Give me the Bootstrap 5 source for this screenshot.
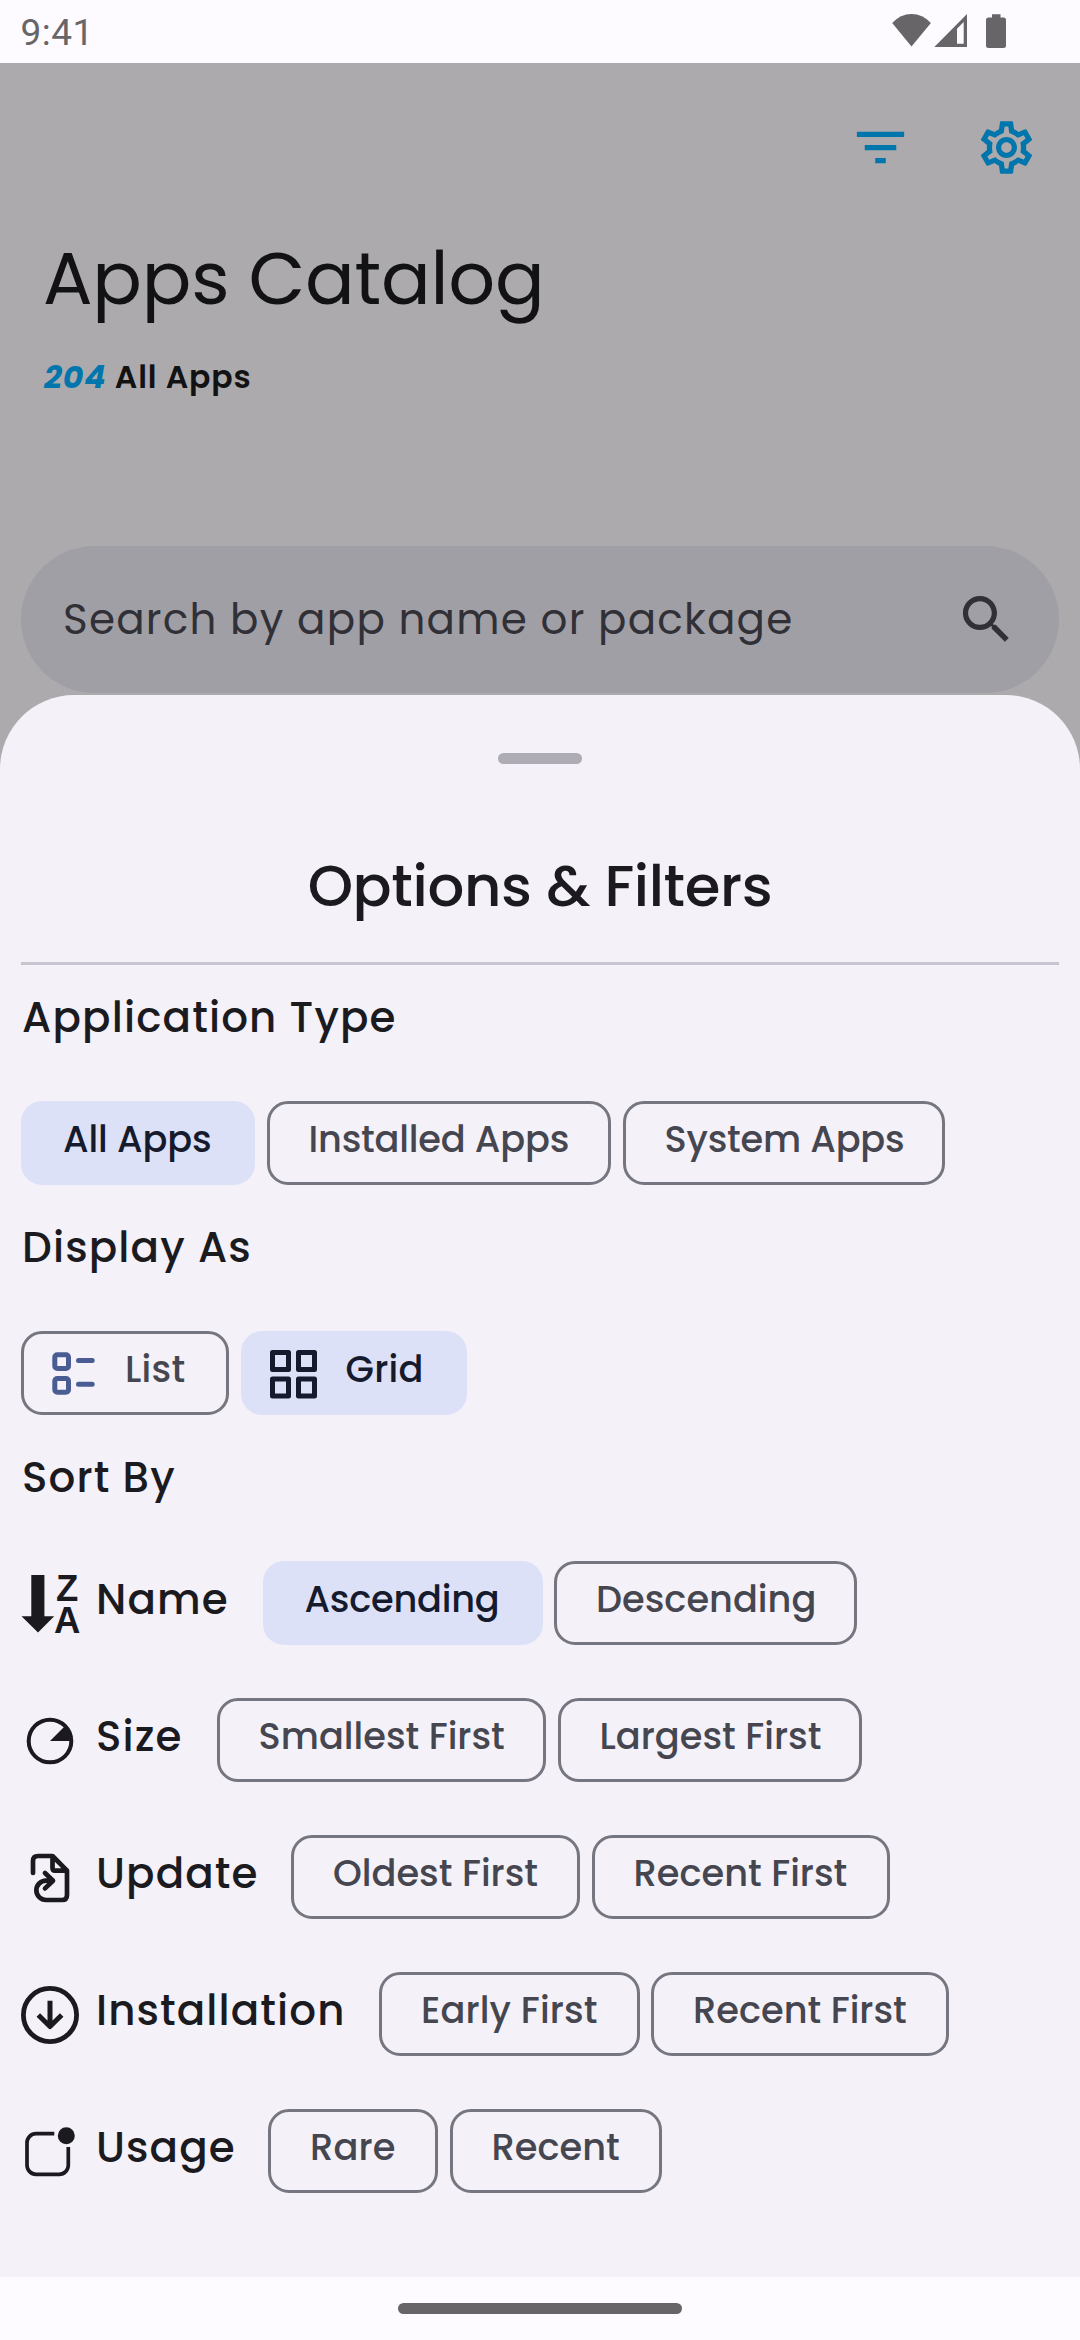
<!DOCTYPE html>
<html lang="en">
<head>
<meta charset="utf-8">
<meta name="viewport" content="width=device-width, initial-scale=1">
<title>Apps Catalog</title>
<link href="https://cdn.jsdelivr.net/npm/bootstrap@5.3.0/dist/css/bootstrap.min.css" rel="stylesheet">
<style>
  body { font-family: Poppins, Inter, sans-serif; background: #fdfbff; color: #1b1b1f; }
  svg { display: block; flex: none; }
  .screen { width: 1080px; height: 2340px; }
  .status-bar { height: 63px; background: #fdfbff; color: #686568; padding-left: 20.5px; }
  .clock { font: 400 37px/66px Roboto, sans-serif; letter-spacing: .5px; }
  .status-icons { margin-right: 60px; }
  .scrimmed { height: 712px; background: #acaaad; color: #121214; padding: 53px 21px 0; }
  .toolbar { gap: 62.7px; color: #0076ac; padding-right: 21px; }
  .page-title { margin: 60px 0 0 22px; font-size: 73.5px; line-height: 80px; font-weight: 400; letter-spacing: -.26px; }
  .app-count { margin: 38px 0 0 23px; font-size: 31.5px; line-height: 40px; font-weight: 600; letter-spacing: .85px; }
  .app-count em { color: #0076ac; font-weight: 700; }
  .search-box { margin-top: 149px; height: 147px; border-radius: 74px; background: #a09fa5; color: #303036; padding: 0 41px 0 42px; }
  .search-hint { font-size: 42px; letter-spacing: 1.25px; }
  .sheet { margin-top: -80px; height: 1582px; border-radius: 74px 74px 0 0; background: #f4f1f9; padding: 58px 21px 0; }
  .grip { width: 84px; height: 11px; border-radius: 5.5px; background: #aeacb4; }
  .sheet-title { margin: 84px 0 0; font-size: 57.75px; line-height: 76px; font-weight: 500; letter-spacing: -.35px; }
  .rule { height: 3px; background: #c8c5d0; margin: 38px 0 -10px; }
  .heading { height: 146px; margin: 0; padding-left: 1px; font-size: 42px; line-height: 126px; font-weight: 500; letter-spacing: 1.15px; }
  .chips { gap: 11.5px; }
  .chip { height: 84px; border: 3px solid #757680; border-radius: 21px; color: #45464f; font-size: 36.75px; line-height: 71px; font-weight: 500; padding: 0 0 7px 39px; background: transparent; text-align: left; white-space: nowrap; }
  .chip.chosen { background: #dde1f8; border-color: #dde1f8; color: #151b2c; }
  .chip.with-icon { padding-left: 0; }
  .chip.with-icon svg { margin-bottom: -7px; }
  .sort-row { margin-bottom: 53px; }
  .sort-name { font-size: 42px; line-height: 77px; padding-bottom: 7px; font-weight: 500; letter-spacing: 1.1px; }
  .home-bar { height: 63px; padding-top: 26px; }
  .home-pill { width: 284px; height: 11px; border-radius: 5.5px; background: #686568; }
  .w-all { width: 234px; letter-spacing: -.15px; } .w-installed { width: 344.5px; letter-spacing: -.2px; } .w-system { width: 322.5px; letter-spacing: -.22px; }
  .w-list { width: 208px; letter-spacing: .3px; } .w-grid { width: 226px; letter-spacing: .3px; }
  .w-asc { width: 280px; letter-spacing: -.25px; } .w-desc { width: 303px; }
  .w-small { width: 329.5px; } .w-large { width: 304.5px; }
  .w-old { width: 289px; } .w-new { width: 298px; }
  .w-early { width: 260.5px; letter-spacing: .15px; } .w-rare { width: 170px; letter-spacing: .15px; } .w-recent { width: 212.5px; }
  .n-name { width: 166.5px; } .n-size { width: 120.5px; } .n-update { width: 195px; } .n-inst { width: 283px; } .n-usage { width: 172px; }
</style>
</head>
<body>
<div class="screen mx-auto overflow-hidden position-relative">
  <header class="status-bar d-flex justify-content-between">
    <span class="clock">9:41</span>
    <svg class="status-icons" width="140" height="63" viewBox="880 0 140 63" fill="currentColor">
      <path d="M892.2 23Q900.500 14 911.500 14T930.900 23L911.500 46.600Z"/>
      <path fill-rule="evenodd" d="M934.300 47L967 14V47ZM957 43.700H963.700V22L957 28.700Z"/>
      <path d="M992 14.200H1000.500V17.500H1003.500Q1006 17.500 1006 20V45.500Q1006 48 1003.500 48H988.500Q986 48 986 45.500V20Q986 17.500 988.500 17.500H992Z"/>
    </svg>
  </header>

  <main class="scrimmed">
    <div class="toolbar d-flex justify-content-end">
      <svg width="63" height="63" viewBox="0 0 24 24" fill="currentColor"><path d="M10 18h4v-2h-4v2zM3 6v2h18V6H3zm3 7h12v-2H6v2z"/></svg>
      <svg width="63" height="63" viewBox="0 0 24 24" fill="currentColor"><path d="M19.430 12.980c.04-.32.07-.64.07-.98s-.03-.66-.07-.98l2.110-1.650c.19-.15.24-.42.12-.64l-2-3.460c-.09-.16-.26-.25-.44-.25-.06 0-.12.01-.17.03l-2.490 1c-.52-.4-1.080-.73-1.690-.98l-.38-2.650C14.460 2.180 14.250 2 14 2h-4c-.25 0-.46.18-.49.42l-.38 2.650c-.61.25-1.170.59-1.690.98l-2.490-1c-.06-.02-.12-.03-.18-.03-.17 0-.34.09-.43.25l-2 3.460c-.13.22-.07.49.12.64l2.110 1.650c-.04.32-.07.65-.07.98s.03.66.07.98l-2.110 1.650c-.19.15-.24.42-.12.64l2 3.460c.09.16.26.25.44.25.06 0 .12-.01.17-.03l2.490-1c.52.4 1.080.73 1.690.98l.38 2.650c.03.24.24.42.49.42h4c.25 0 .46-.18.49-.42l.38-2.650c.61-.25 1.170-.59 1.690-.98l2.490 1c.06.02.12.03.18.03.17 0 .34-.09.43-.25l2-3.460c.12-.22.07-.49-.12-.64l-2.110-1.650zm-1.980-1.710c.04.31.05.52.05.73 0 .21-.02.43-.05.73l-.14 1.130.89.7 1.080.84-.7 1.210-1.270-.51-1.040-.42-.9.68c-.43.32-.84.56-1.250.73l-1.060.43-.16 1.130-.2 1.350h-1.400l-.19-1.350-.16-1.130-1.060-.43c-.43-.18-.83-.41-1.230-.71l-.91-.7-1.060.43-1.270.51-.7-1.210 1.080-.84.89-.7-.14-1.130c-.03-.31-.05-.54-.05-.74s.02-.43.05-.73l.14-1.130-.89-.7-1.080-.84.7-1.210 1.270.51 1.040.42.9-.68c.43-.32.84-.56 1.250-.73l1.060-.43.16-1.130.2-1.350h1.390l.19 1.350.16 1.130 1.060.43c.43.18.83.41 1.230.71l.91.7 1.060-.43 1.270-.51.7 1.210-1.070.85-.89.7.14 1.130zM12 8c-2.210 0-4 1.790-4 4s1.790 4 4 4 4-1.790 4-4-1.790-4-4-4zm0 6c-1.100 0-2-.9-2-2s.9-2 2-2 2 .9 2 2-.9 2-2 2z"/></svg>
    </div>
    <h1 class="page-title">Apps Catalog</h1>
    <p class="app-count"><em>204</em> All Apps</p>
    <div class="search-box d-flex align-items-center justify-content-between">
      <span class="search-hint">Search by app name or package</span>
      <svg width="63" height="63" viewBox="0 0 24 24" fill="currentColor"><path d="M15.500 14h-.79l-.28-.27C15.410 12.590 16 11.110 16 9.500 16 5.910 13.090 3 9.500 3S3 5.910 3 9.500 5.910 16 9.500 16c1.610 0 3.090-.59 4.230-1.570l.27.28v.79l5 4.990L20.490 19l-4.990-5zm-6 0C7.010 14 5 11.990 5 9.500S7.010 5 9.500 5 14 7.010 14 9.500 11.990 14 9.500 14z"/></svg>
    </div>
  </main>

  <section class="sheet position-relative">
    <div class="grip mx-auto"></div>
    <h2 class="sheet-title text-center">Options &amp; Filters</h2>
    <div class="rule"></div>

    <h3 class="heading">Application Type</h3>
    <div class="chips d-flex">
      <button class="chip chosen w-all">All Apps</button>
      <button class="chip w-installed">Installed Apps</button>
      <button class="chip w-system">System Apps</button>
    </div>

    <h3 class="heading">Display As</h3>
    <div class="chips d-flex">
      <button class="chip with-icon w-list d-flex align-items-start">
        <svg width="101" height="78" viewBox="24 3 101 78" fill="none" stroke="#495d92" stroke-width="5">
          <rect x="54.800" y="23.800" width="13.700" height="13.700" rx="2.500"/><rect x="54.800" y="47.500" width="13.700" height="13.700" rx="2.500"/>
          <path d="M78.500 29.400H92.200M78.500 53.200H92.200" stroke-linecap="round"/>
        </svg>
        <span>List</span>
      </button>
      <button class="chip chosen with-icon w-grid d-flex align-items-start">
        <svg width="102" height="78" viewBox="243 3 102 78" fill="none" stroke="#151b2c" stroke-width="5" stroke-linejoin="round">
          <path d="M271.500 21.500h16v17h-16zM297.500 21.500h16v17h-16zM271.500 48h16v17h-16zM297.500 48h16v17h-16z"/>
        </svg>
        <span>Grid</span>
      </button>
    </div>

    <h3 class="heading">Sort By</h3>
    <div class="sort-row d-flex">
      <svg width="75" height="84" viewBox="21 0 75 84" fill="#1b1b1f">
        <path d="M31.300 14H44.400V55.300H54.200L38 71.500L21.500 55.300H31.300Z"/>
        <g font-family="Liberation Sans, sans-serif" font-weight="700" font-size="36.500" text-anchor="middle"><text x="67.200" y="39.500">Z</text><text x="67.200" y="72">A</text></g>
      </svg>
      <span class="sort-name n-name">Name</span>
      <div class="chips d-flex"><button class="chip chosen w-asc">Ascending</button><button class="chip w-desc">Descending</button></div>
    </div>
    <div class="sort-row d-flex">
      <svg width="75" height="84" viewBox="21 0 75 84">
        <circle cx="50" cy="43" r="21.300" fill="none" stroke="#1b1b1f" stroke-width="4"/><path d="M50 43H72A22 22 0 0 0 65.500 27.500Z" fill="#1b1b1f"/>
      </svg>
      <span class="sort-name n-size">Size</span>
      <div class="chips d-flex"><button class="chip w-small">Smallest First</button><button class="chip w-large">Largest First</button></div>
    </div>
    <div class="sort-row d-flex">
      <svg width="75" height="84" viewBox="21 0 75 84" fill="none" stroke="#1b1b1f" stroke-width="4.700" stroke-linecap="round" stroke-linejoin="round">
        <path d="M33 38V26Q33 21 38 21H52.500L67 35.700V60Q67 65 62 65H46A9.650 9.650 0 0 1 46 45.700H53M45 38L53 45.700L45 53.400M52.500 21V33Q52.500 35.700 55 35.700H67"/>
      </svg>
      <span class="sort-name n-update">Update</span>
      <div class="chips d-flex"><button class="chip w-old">Oldest First</button><button class="chip w-new">Recent First</button></div>
    </div>
    <div class="sort-row d-flex">
      <svg width="75" height="84" viewBox="21 0 75 84" fill="none" stroke="#1b1b1f" stroke-linejoin="round">
        <circle cx="50" cy="43" r="26.600" stroke-width="4.800"/><path d="M50 28.700V54.500M38.300 43L50 54.500L61.700 43" stroke-width="5"/>
      </svg>
      <span class="sort-name n-inst">Installation</span>
      <div class="chips d-flex"><button class="chip w-early">Early First</button><button class="chip w-new">Recent First</button></div>
    </div>
    <div class="sort-row d-flex">
      <svg width="75" height="84" viewBox="21 0 75 84">
        <path d="M54.300 24.700H36A9 9 0 0 0 27 33.700V56.300A9 9 0 0 0 36 65.300H59.300A9 9 0 0 0 68.300 56.300V38" fill="none" stroke="#1b1b1f" stroke-width="3.700"/><circle cx="66.300" cy="26.700" r="8.500" fill="#1b1b1f"/>
      </svg>
      <span class="sort-name n-usage">Usage</span>
      <div class="chips d-flex"><button class="chip w-rare">Rare</button><button class="chip w-recent">Recent</button></div>
    </div>
  </section>
  <footer class="home-bar"><div class="home-pill mx-auto"></div></footer>
</div>
<script src="https://cdn.jsdelivr.net/npm/bootstrap@5.3.0/dist/js/bootstrap.bundle.min.js"></script>
</body>
</html>
